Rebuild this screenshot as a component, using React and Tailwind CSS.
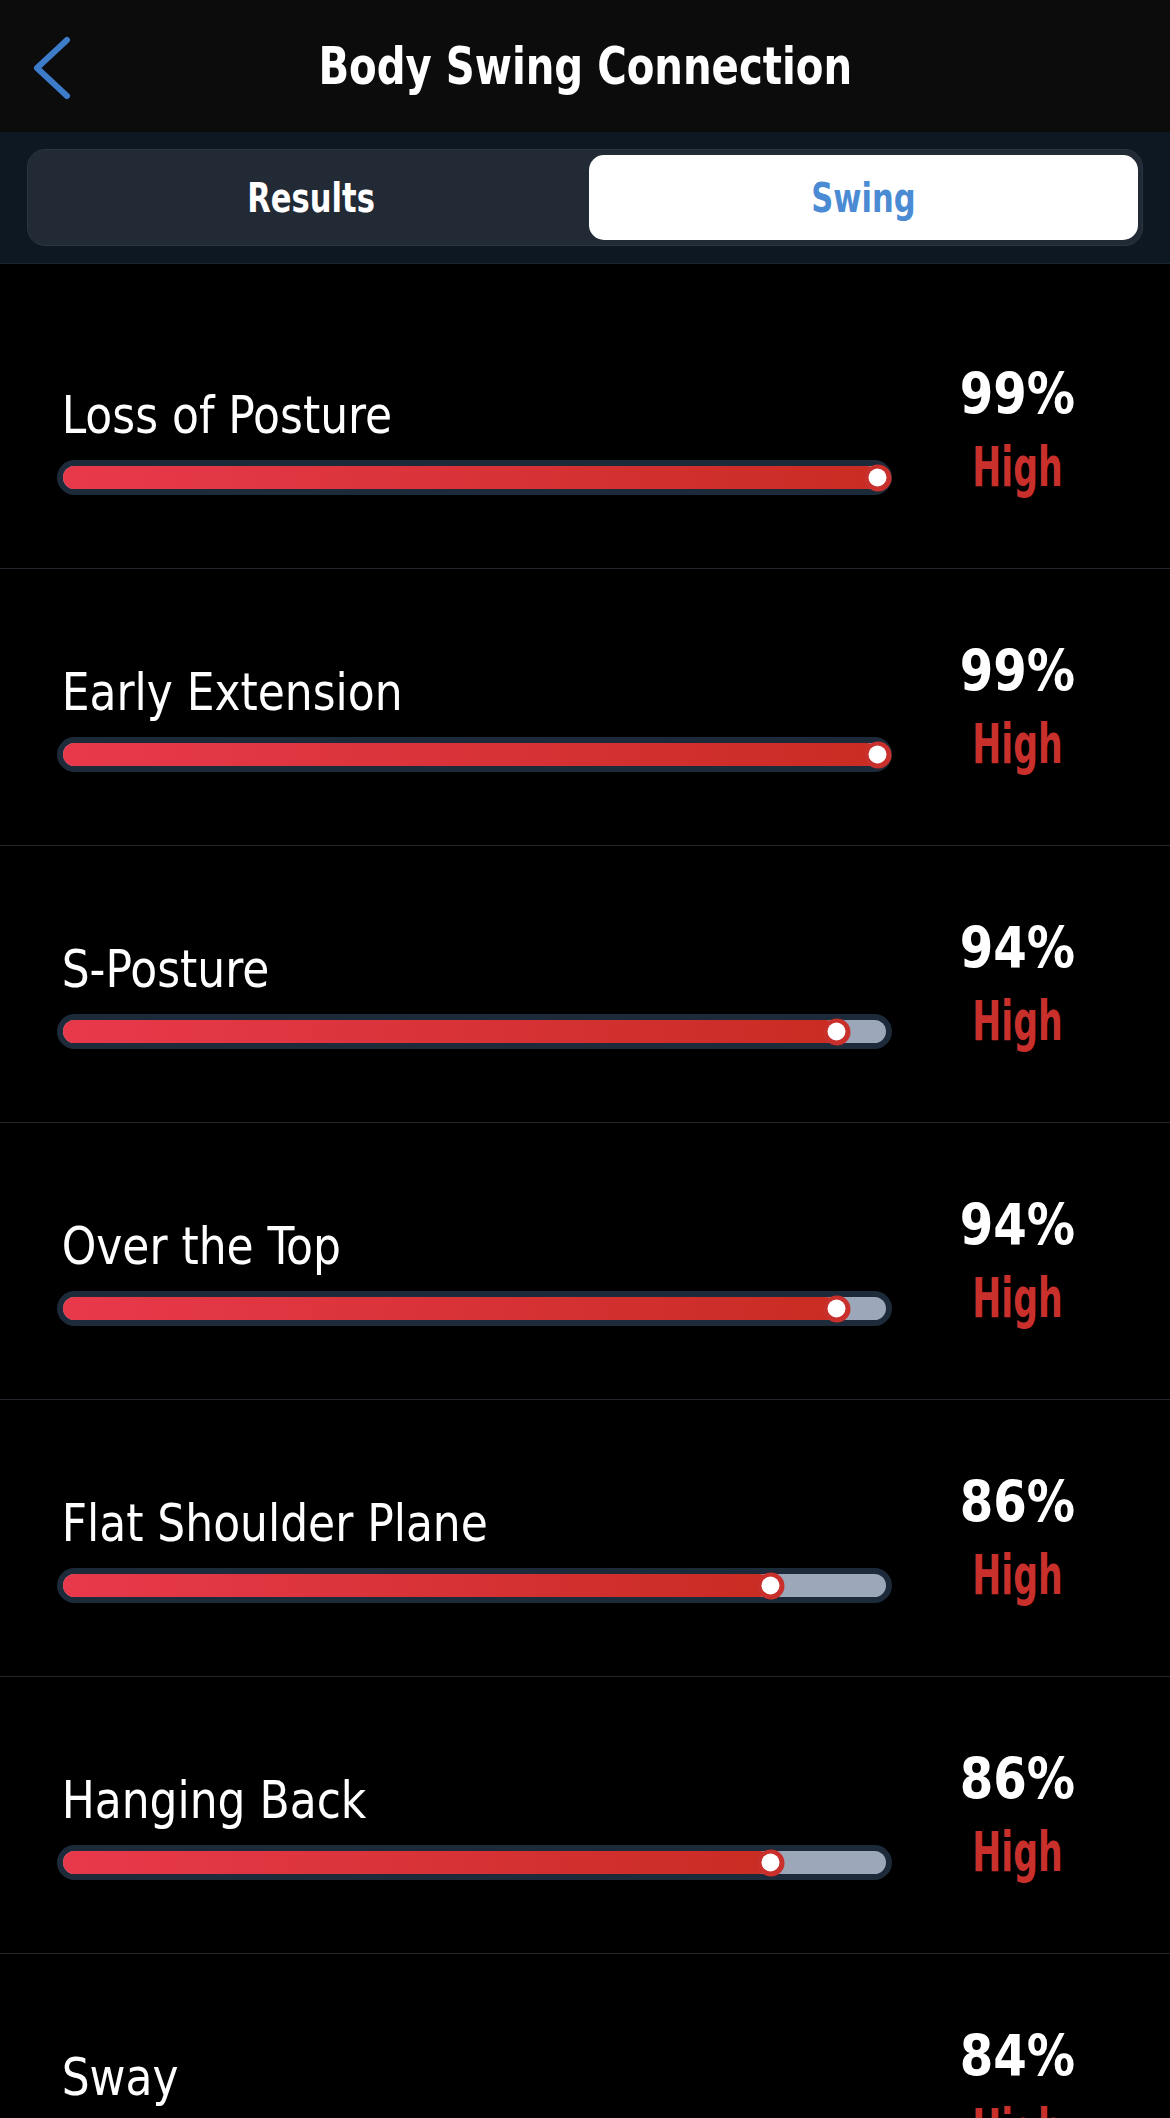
import React from 'react';

const rows = [
  { label: 'Loss of Posture', pct: 99 },
  { label: 'Early Extension', pct: 99 },
  { label: 'S-Posture', pct: 94 },
  { label: 'Over the Top', pct: 94 },
  { label: 'Flat Shoulder Plane', pct: 86 },
  { label: 'Hanging Back', pct: 86 },
  { label: 'Sway', pct: 84 },
];

const narrow = "font-['DejaVu_Sans_Condensed','Liberation_Sans',sans-serif]";

function Bar({ pct }) {
  return (
    <div className="h-[35px] w-full rounded-full bg-[#1c2a3a] p-[6px]">
      <div className="relative h-[23px] w-full rounded-full bg-[#9ca7ba]">
        <div
          className="absolute inset-y-0 left-0 rounded-full bg-gradient-to-r from-[#e8394b] to-[#c92c22]"
          style={{ width: `${pct}%` }}
        />
        <div
          className="absolute top-1/2 flex h-[27px] w-[27px] -translate-x-1/2 -translate-y-1/2 items-center justify-center rounded-full bg-[#c9302b]"
          style={{ left: `${pct}%` }}
        >
          <div className="h-[18px] w-[18px] rounded-full bg-white" />
        </div>
      </div>
    </div>
  );
}

export default function App() {
  return (
    <div className={`h-[2118px] w-full overflow-hidden bg-black ${narrow}`}>
      {/* header */}
      <div className="relative flex h-[132px] items-center justify-center bg-[#0c0c0c]">
        <svg
          className="absolute left-[30px] top-[36px]"
          width="44"
          height="64"
          viewBox="0 0 44 64"
          fill="none"
        >
          <path
            d="M37 4 L7 32 L37 60"
            stroke="#3d7cc9"
            strokeWidth="6"
            strokeLinecap="round"
            strokeLinejoin="round"
          />
        </svg>
        <h1 className="scale-x-[0.86] whitespace-nowrap text-[52px] font-bold leading-none text-white">
          Body Swing Connection
        </h1>
      </div>

      {/* tabs */}
      <div className="h-[132px] border-b border-[#1a2532] bg-[#0e1823] px-[27px] pt-[17px]">
        <div className="flex h-[97px] rounded-[18px] border border-[#2a3542] bg-[#212a35] p-[5px] pr-[4px]">
          <button className="flex flex-1 items-center justify-center">
            <span className="scale-x-[0.85] text-[40px] font-bold leading-none text-white">Results</span>
          </button>
          <button className="flex w-[549px] items-center justify-center rounded-[15px] bg-white">
            <span className="scale-x-[0.85] text-[40px] font-bold leading-none text-[#4a8bd4]">Swing</span>
          </button>
        </div>
      </div>

      {/* list */}
      <div className="pt-[28px]">
        {rows.map((r, i) => (
          <div key={i} className="flex h-[277px] border-b border-[#22272d]">
            <div className="flex w-[892px] flex-col pl-[57px] pt-[97px]">
              <div className="origin-left scale-x-[0.94] pl-[5px] text-[52px] leading-none text-white">
                {r.label}
              </div>
              <div className="mt-[19px]">
                <Bar pct={r.pct} />
              </div>
            </div>
            <div className="flex w-[251px] flex-col items-center pt-[74px]">
              <div className="scale-x-[0.94] text-[57px] font-bold leading-none text-white">{r.pct}%</div>
              <div className="mt-[17px] scale-x-[0.7] text-[55px] font-bold leading-none text-[#c9302c]">
                High
              </div>
            </div>
          </div>
        ))}
      </div>
    </div>
  );
}
